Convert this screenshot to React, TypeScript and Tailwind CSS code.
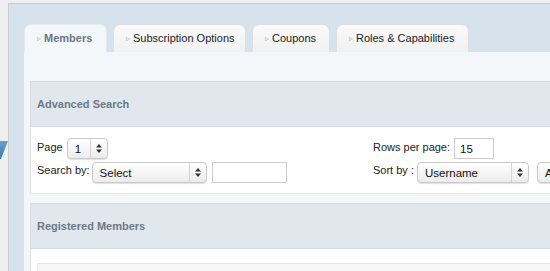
import React from "react";

const tabs = [
  { label: "Members", w: "w-[83px]", active: true },
  { label: "Subscription Options", w: "w-[133px]", active: false },
  { label: "Coupons", w: "w-[78px]", active: false },
  { label: "Roles & Capabilities", w: "w-[133px]", active: false },
];

function Arrows() {
  return (
    <svg width="6" height="9" viewBox="0 0 6 9" className="shrink-0">
      <polygon points="3,0 6,3.5 0,3.5" fill="#333" />
      <polygon points="0,5.5 6,5.5 3,9" fill="#333" />
    </svg>
  );
}

function FakeSelect({ value, className }: { value: string; className: string }) {
  return (
    <div
      className={`flex items-center h-[21px] shrink-0 rounded-[4px] border border-[#c9c9c9] bg-gradient-to-b from-[#ffffff] to-[#ececec] shadow-[0_1px_1px_rgba(0,0,0,0.12)] ${className}`}
    >
      <span className="flex-1 pl-[7px] text-[11.5px] text-[#111] leading-none pt-[2px] whitespace-nowrap overflow-hidden">
        {value}
      </span>
      <div className="flex items-center justify-center w-[17px] h-full border-l border-[#d4d4d4]">
        <Arrows />
      </div>
    </div>
  );
}

function SectionHeader({ title }: { title: string }) {
  return (
    <div className="h-[46px] bg-[#e0e8ee] border-t border-b border-[#d3dce3] flex items-center pl-[6px]">
      <span className="text-[11px] font-bold text-[#6d7985]">{title}</span>
    </div>
  );
}

export default function App() {
  return (
    <div
      className="flex w-[550px] h-[271px] overflow-hidden bg-[#efefef]"
      style={{ fontFamily: '"Liberation Sans", Arial, sans-serif' }}
    >
      {/* left gutter with the sidebar arrow */}
      <div className="w-[8px] shrink-0 pt-[141px]">
        <svg width="8" height="18" viewBox="0 0 8 18">
          <defs>
            <linearGradient id="tri" x1="0" y1="0" x2="0" y2="1">
              <stop offset="0" stopColor="#6a9fd0" />
              <stop offset="1" stopColor="#3f78ad" />
            </linearGradient>
          </defs>
          <polygon points="0,0 8,0 1,18 0,18" fill="url(#tri)" />
        </svg>
      </div>

      <div className="flex-1 mt-[3px] border-l border-t border-[#c8d0d6] bg-[#d6e3ec] pt-[20px] pl-[15px] overflow-hidden">
        {/* tabs */}
        <div className="flex gap-[6px] items-end">
          {tabs.map((t) => (
            <div
              key={t.label}
              className={`${t.w} h-[28px] shrink-0 rounded-t-[7px] border border-b-0 flex items-center pl-[12px] gap-[3px] whitespace-nowrap ${
                t.active
                  ? "bg-[#f3f7fa] border-[#e4ebf0]"
                  : "bg-gradient-to-b from-[#fafafa] to-[#f1f1f1] border-[#dedede]"
              }`}
            >
              <span className="text-[8px] text-[#a8adb2] leading-none">▹</span>
              <span
                className={`text-[11px] leading-none ${
                  t.active ? "font-bold text-[#6b7783]" : "text-[#1c1c1c]"
                }`}
              >
                {t.label}
              </span>
            </div>
          ))}
        </div>

        {/* panel */}
        <div className="w-[600px] h-[240px] bg-[#f3f7fa] pt-[29px] pl-[6px]">
          <div className="border-l border-[#d8e0e6]">
            <SectionHeader title="Advanced Search" />
            <div className="bg-white h-[66px] pl-[6px] pt-[11px] flex flex-col gap-[4px] text-[11px] text-[#222] whitespace-nowrap">
              <div className="flex items-start h-[20px]">
                <div className="flex items-start w-[336px] shrink-0">
                  <span className="pt-[1px] mr-[4px]">Page</span>
                  <FakeSelect value="1" className="w-[41px]" />
                </div>
                <div className="flex items-start shrink-0">
                  <span className="pt-[1px] mr-[4px]">Rows per page:</span>
                  <div className="w-[40px] h-[21px] border border-[#cccccc] bg-white flex items-center pl-[5px] pt-[3px] text-[11.5px] text-[#111]">
                    15
                  </div>
                </div>
              </div>
              <div className="flex items-start h-[21px]">
                <div className="flex items-start w-[336px] shrink-0">
                  <span className="mr-[2px]">Search by:</span>
                  <FakeSelect value="Select" className="w-[115px]" />
                  <div className="ml-[5px] w-[75px] h-[21px] border border-[#cccccc] bg-white" />
                </div>
                <div className="flex items-start shrink-0">
                  <span className="mr-[3px]">Sort by :</span>
                  <FakeSelect value="Username" className="w-[112px]" />
                  <FakeSelect value="Ascending" className="ml-[8px] w-[100px]" />
                </div>
              </div>
            </div>
          </div>

          <div className="h-[10px] border-t border-[#e3e9ee]" />

          <div className="border-l border-[#d8e0e6]">
            <SectionHeader title="Registered Members" />
            <div className="bg-white h-[40px] pl-[6px] pt-[14px]">
              <div className="h-[30px] bg-[#f6f6f6] border border-[#e6e6e6]" />
            </div>
          </div>
        </div>
      </div>
    </div>
  );
}
